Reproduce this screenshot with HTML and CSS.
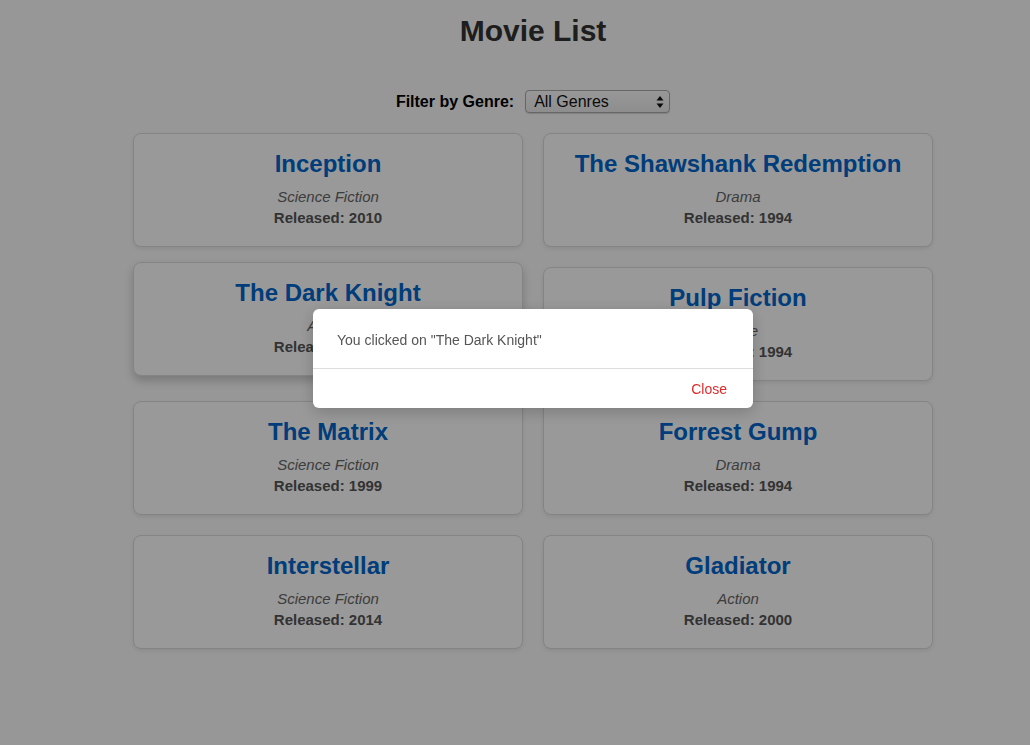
FILE: index.html
```html
<!DOCTYPE html>
<html lang="en">
<head>
<meta charset="utf-8">
<title>Movie List</title>
<link rel="stylesheet" href="styles.css">
</head>
<body>
<div class="app">
  <h1 class="page-title">Movie List</h1>
  <div class="filter">
    <label class="filter-label" for="genre">Filter by Genre:</label>
    <div class="select-wrap">
      <select id="genre" class="select">
        <option>All Genres</option>
        <option>Science Fiction</option>
        <option>Drama</option>
        <option>Action</option>
        <option>Crime</option>
      </select>
      <svg class="select-arrows" width="8" height="14" viewBox="0 0 8 14"><path d="M4 1 L7.5 5.5 H0.5 Z M4 13 L7.5 8.5 H0.5 Z" fill="#111"/></svg>
    </div>
  </div>
  <div class="grid">
    <div class="card"><h2 class="card-title">Inception</h2><p class="card-genre">Science Fiction</p><p class="card-year">Released: 2010</p></div>
    <div class="card"><h2 class="card-title">The Shawshank Redemption</h2><p class="card-genre">Drama</p><p class="card-year">Released: 1994</p></div>
    <div class="card is-hovered"><h2 class="card-title">The Dark Knight</h2><p class="card-genre">Action</p><p class="card-year">Released: 2008</p></div>
    <div class="card"><h2 class="card-title">Pulp Fiction</h2><p class="card-genre">Crime</p><p class="card-year">Released: 1994</p></div>
    <div class="card"><h2 class="card-title">The Matrix</h2><p class="card-genre">Science Fiction</p><p class="card-year">Released: 1999</p></div>
    <div class="card"><h2 class="card-title">Forrest Gump</h2><p class="card-genre">Drama</p><p class="card-year">Released: 1994</p></div>
    <div class="card"><h2 class="card-title">Interstellar</h2><p class="card-genre">Science Fiction</p><p class="card-year">Released: 2014</p></div>
    <div class="card"><h2 class="card-title">Gladiator</h2><p class="card-genre">Action</p><p class="card-year">Released: 2000</p></div>
  </div>
</div>
<div class="overlay"></div>
<div class="modal">
  <div class="modal-body">You clicked on "The Dark Knight"</div>
  <div class="modal-footer"><button class="modal-close">Close</button></div>
</div>
</body>
</html>
```
FILE: styles.css
```css
* { box-sizing: border-box; }
html, body { margin: 0; padding: 0; }
body {
  background: #fcfcfc;
  font-family: "Liberation Sans", Arial, Helvetica, sans-serif;
  color: #333;
  width: 1030px;
  height: 745px;
  overflow: hidden;
}
.app {
  width: 800px;
  margin-left: 133px;
  padding-top: 14px;
}
.page-title {
  margin: 0;
  text-align: center;
  font-size: 30px;
  line-height: 34px;
  font-weight: bold;
  color: #333;
}
.filter {
  margin-top: 42px;
  display: flex;
  justify-content: center;
  align-items: center;
  gap: 11px;
}
.filter-label {
  font-size: 16px;
  font-weight: bold;
  color: #000;
}
.select-wrap { position: relative; }
.select {
  -webkit-appearance: none;
  appearance: none;
  width: 145px;
  height: 23px;
  padding: 0 0 0 8px;
  border: 1px solid #aaa;
  border-radius: 4px;
  background: linear-gradient(#fdfdfd, #ececec);
  box-shadow: 0 1px 1px rgba(0,0,0,0.15);
  font-family: "Liberation Sans", Arial, sans-serif;
  font-size: 16px;
  color: #111;
}
.select-arrows {
  position: absolute;
  right: 6px;
  top: 5px;
  pointer-events: none;
}
.grid {
  margin-top: 20px;
  display: grid;
  grid-template-columns: 390px 390px;
  column-gap: 20px;
  row-gap: 20px;
}
.card {
  height: 114px;
  background: #fff;
  border: 1px solid #ddd;
  border-radius: 8px;
  box-shadow: 0 2px 4px rgba(0,0,0,0.08);
  text-align: center;
  padding-top: 16px;
}
.card.is-hovered {
  transform: translateY(-5px);
  box-shadow: 0 5px 10px rgba(0,0,0,0.2);
}
.card-title {
  margin: 0;
  font-size: 24px;
  line-height: 28px;
  font-weight: bold;
  color: #0066cc;
}
.card-genre {
  margin: 10px 0 0;
  font-size: 15px;
  line-height: 18px;
  font-style: italic;
  color: #666;
}
.card-year {
  margin: 3px 0 0;
  font-size: 15px;
  line-height: 18px;
  font-weight: bold;
  color: #555;
}
.overlay {
  position: fixed;
  inset: 0;
  background: rgba(0,0,0,0.4);
}
.modal {
  position: fixed;
  left: 313px;
  top: 309px;
  width: 440px;
  background: #fff;
  border-radius: 6px;
  box-shadow: 0 4px 16px rgba(0,0,0,0.2);
  font-family: "Liberation Sans", Arial, sans-serif;
}
.modal-body {
  padding: 22px 24px 19px;
  font-size: 14px;
  line-height: 18px;
  color: #555;
  border-bottom: 1px solid #ddd;
}
.modal-footer {
  display: flex;
  justify-content: flex-end;
  padding: 11px 26px 10px;
}
.modal-close {
  border: 0;
  background: none;
  padding: 0;
  font-family: "Liberation Sans", Arial, sans-serif;
  font-size: 14px;
  line-height: 18px;
  color: #e02a2a;
  cursor: pointer;
}
```
